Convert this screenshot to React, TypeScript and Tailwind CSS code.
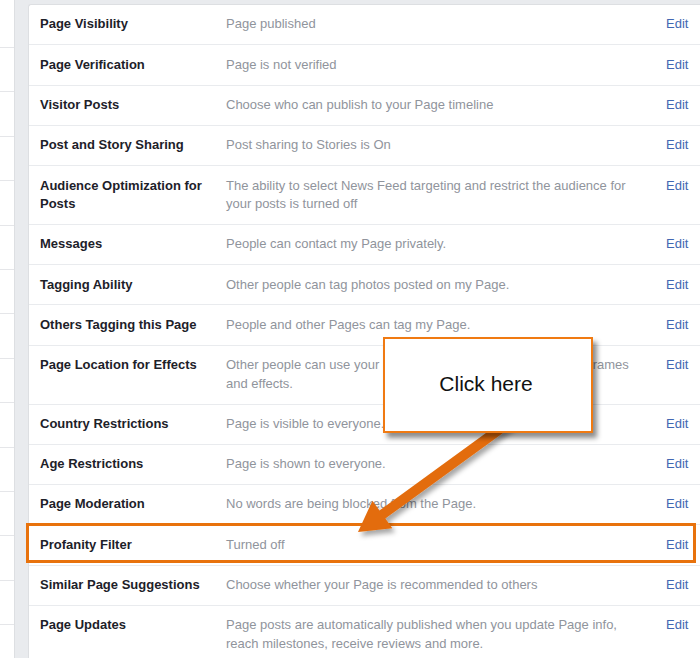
const rows: { label: string; desc: string }[] = [
  { label: "Page Visibility", desc: "Page published" },
  { label: "Page Verification", desc: "Page is not verified" },
  { label: "Visitor Posts", desc: "Choose who can publish to your Page timeline" },
  { label: "Post and Story Sharing", desc: "Post sharing to Stories is On" },
  {
    label: "Audience Optimization for Posts",
    desc: "The ability to select News Feed targeting and restrict the audience for your posts is turned off",
  },
  { label: "Messages", desc: "People can contact my Page privately." },
  { label: "Tagging Ability", desc: "Other people can tag photos posted on my Page." },
  { label: "Others Tagging this Page", desc: "People and other Pages can tag my Page." },
  {
    label: "Page Location for Effects",
    desc: "Other people can use your Page's location for photo and video frames and effects.",
  },
  { label: "Country Restrictions", desc: "Page is visible to everyone." },
  { label: "Age Restrictions", desc: "Page is shown to everyone." },
  { label: "Page Moderation", desc: "No words are being blocked from the Page." },
  { label: "Profanity Filter", desc: "Turned off" },
  { label: "Similar Page Suggestions", desc: "Choose whether your Page is recommended to others" },
  {
    label: "Page Updates",
    desc: "Page posts are automatically published when you update Page info, reach milestones, receive reviews and more.",
  },
];

function Arrow() {
  // arrow from the callout down to the highlighted row
  const T = [358, 532];
  const d = [-0.813, 0.585];
  const n = [0.585, 0.813];
  const B = [T[0] - 30 * d[0], T[1] - 30 * d[1]];
  const S = [515, 418];
  const p = (a: number[], k: number) => `${a[0] + k * n[0]},${a[1] + k * n[1]}`;
  const pts = [p(S, -5), p(B, -5), p(B, -17), `${T[0]},${T[1]}`, p(B, 17), p(B, 5), p(S, 5)].join(" ");
  return (
    <svg className="absolute left-0 top-0" width="700" height="658">
      <defs>
        <filter id="sh" x="-20%" y="-20%" width="140%" height="140%">
          <feDropShadow dx="3" dy="4" stdDeviation="2.5" floodColor="#000" floodOpacity="0.35" />
        </filter>
      </defs>
      <polygon points={pts} fill="#e36c0a" filter="url(#sh)" />
    </svg>
  );
}

export default function App() {
  return (
    <div className="relative w-[700px] h-[658px] overflow-hidden bg-[#e9ebee] font-['Liberation_Sans',Arial,sans-serif]">
      <div className="flex h-full">
        <div className="w-[15px] shrink-0 bg-white border-r border-[#dddfe2] flex flex-col">
          <div className="h-[48px] shrink-0 border-b border-[#e5e6e9]" />
          {Array.from({ length: 14 }).map((_, i) => (
            <div key={i} className="h-[44.4px] shrink-0 border-b border-[#e5e6e9]" />
          ))}
        </div>
        <div className="w-[13px] shrink-0" />
        <div className="flex-1 mt-[4px] bg-white border-l border-t border-[#dddfe2] rounded-tl-[3px] min-w-[690px]">
          {rows.map((r) => (
            <div
              key={r.label}
              className="flex border-b border-[#e9ebee] py-[10.4px] pl-[11px] text-[13px] leading-[18.5px]"
            >
              <div className="w-[186px] shrink-0 pr-[16px] font-bold text-[#1d2129]">{r.label}</div>
              <div className="w-[422px] shrink-0 text-[#90949c]">{r.desc}</div>
              <div className="pl-[18px] text-[#4267b2]">Edit</div>
            </div>
          ))}
        </div>
      </div>

      <div className="absolute left-[26px] top-[523px] w-[670px] h-[40px] border-[3px] border-[#e8720c]" />

      <Arrow />

      <div className="absolute left-[383px] top-[337px] w-[210px] h-[96px] bg-white border-[2.5px] border-[#f07a12] shadow-[4px_5px_5px_rgba(0,0,0,0.45)] flex items-center justify-center pb-[3px] pr-[4px]">
        <span className="text-[21px] text-[#111]">Click here</span>
      </div>
    </div>
  );
}
